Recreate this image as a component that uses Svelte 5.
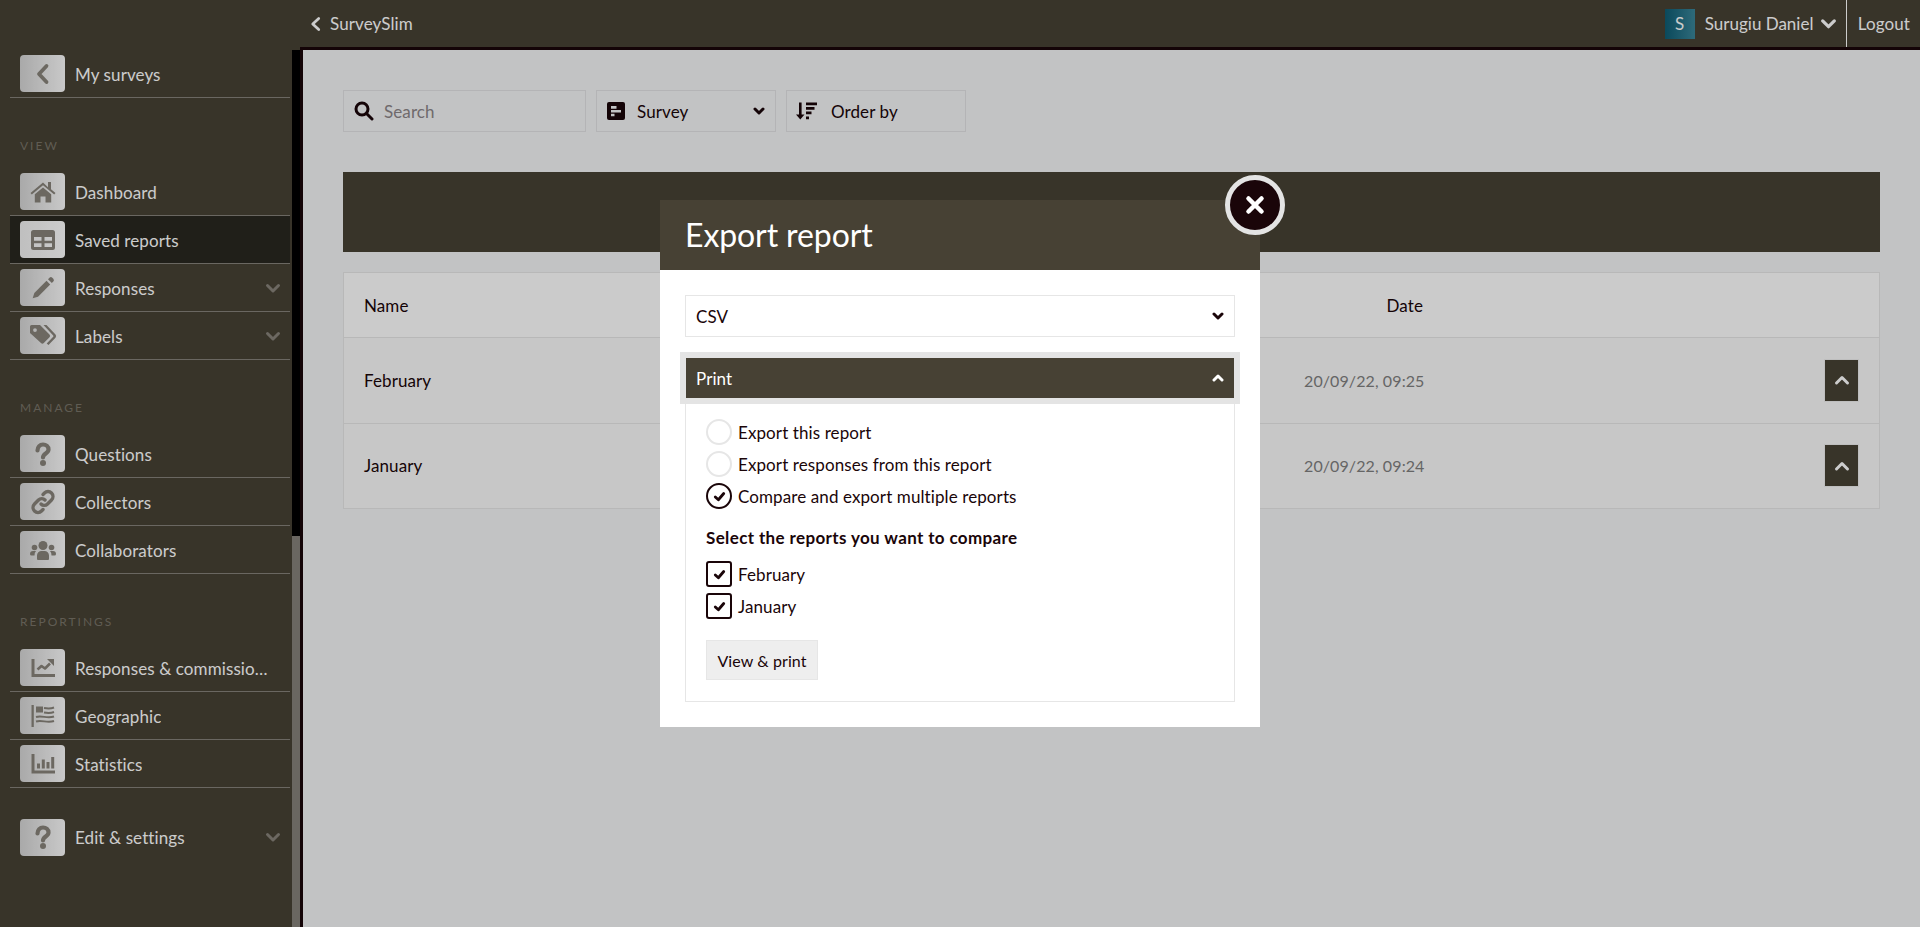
<script>
	const groups = [
		{ label: 'VIEW', items: [
			{ name: 'Dashboard', icon: 'home' },
			{ name: 'Saved reports', icon: 'table', active: true },
			{ name: 'Responses', icon: 'pencil', more: true },
			{ name: 'Labels', icon: 'tags', more: true }
		] },
		{ label: 'MANAGE', items: [
			{ name: 'Questions', icon: 'question' },
			{ name: 'Collectors', icon: 'link' },
			{ name: 'Collaborators', icon: 'users' }
		] },
		{ label: 'REPORTINGS', items: [
			{ name: 'Responses & commissions', icon: 'line' },
			{ name: 'Geographic', icon: 'flag' },
			{ name: 'Statistics', icon: 'bars' }
		] }
	];
	const rows = [
		{ name: 'February', date: '20/09/22, 09:25' },
		{ name: 'January', date: '20/09/22, 09:24' }
	];
	const exportOptions = [
		{ label: 'Export this report' },
		{ label: 'Export responses from this report' },
		{ label: 'Compare and export multiple reports', checked: true }
	];
</script>

{#snippet chevron(cls, up = false)}
	<svg class={cls} viewBox="0 0 16 16"><path d={up ? 'M2.500 11 8 5.500l5.500 5.500' : 'M2.500 5.500 8 11l5.500-5.500'} /></svg>
{/snippet}

{#snippet tick()}
	<svg class="tick" viewBox="0 0 16 16"><path d="M3.500 8.500 6.800 11.500 12.500 4.800" /></svg>
{/snippet}

{#snippet navIcon(kind)}
	<svg class="nav-glyph" viewBox="0 0 24 24">
		{#if kind === 'back'}
			<path class="line" d="M15.500 4 8 12l7.500 8" style="stroke-width:3.800" />
		{:else if kind === 'home'}
			<path d="M12 2.500-0.500 13l1.300 1.600L12 5.200l11.200 9.400 1.300-1.600-4.500-3.800V2h-3v5.200z" />
			<path d="M12 7.500 3.800 14.300V22.500h5.700v-6h5v6h5.700v-8.200z" />
		{:else if kind === 'table'}
			<path fill-rule="evenodd" d="M2.500 2h19A2.500 2.500 0 0 1 24 4.500v15a2.500 2.500 0 0 1-2.500 2.500h-19A2.500 2.500 0 0 1 0 19.500v-15A2.500 2.500 0 0 1 2.500 2zM3 9v3.700h7.500V9zm10.500 0v3.700H21V9zM3 15.300V19h7.500v-3.700zm10.500 0V19H21v-3.700z" />
		{:else if kind === 'pencil'}
			<path d="M15.500 4.800 19.200 8.500 7 20.700l-5.300 1.500L3.300 17z" />
			<path d="M17 3.200l1.500-1.500a2 2 0 0 1 2.800 0l1 1a2 2 0 0 1 0 2.800L20.800 7z" />
		{:else if kind === 'tags'}
			<path fill-rule="evenodd" d="M-1 2.500A1.500 1.500 0 0 1 0.500 1H9l9.500 9.500a2 2 0 0 1 0 2.800L12.800 19a2 2 0 0 1-2.800 0L-1 9zM4 4.200A1.900 1.900 0 1 0 4 8 1.900 1.900 0 0 0 4 4.200z" />
			<path d="M12.500 1h3l9 9.500a2.500 2.500 0 0 1 0 3.200L17.500 21l-1.800-1.600 6.500-6.700a1 1 0 0 0 0-1.300z" />
		{:else if kind === 'question'}
			<path class="line" d="M6.500 8.500C6.500 4.800 9 2.500 12 2.500s5.500 2 5.500 5c0 4-5.500 4-5.500 8" style="stroke-width:4.200" />
			<circle cx="12" cy="21" r="3" />
		{:else if kind === 'link'}
			<path class="line" d="M10 14a4.500 4.500 0 0 0 6.500 0l4-4A4.900 4.900 0 0 0 13.500 3L12 4.500" style="stroke-width:3.400" />
			<path class="line" d="M14 10a4.500 4.500 0 0 0-6.500 0l-4 4A4.900 4.900 0 0 0 10.500 21l1.500-1.500" style="stroke-width:3.400" />
		{:else if kind === 'users'}
			<circle cx="12" cy="7.500" r="4.500" />
			<circle cx="3.500" cy="9.500" r="2.800" />
			<circle cx="20.500" cy="9.500" r="2.800" />
			<path d="M6 21v-3.500A4.500 4.500 0 0 1 10.500 13h3a4.500 4.500 0 0 1 4.500 4.500V21a1 1 0 0 1-1 1H7a1 1 0 0 1-1-1z" />
			<path d="M-1 16a3 3 0 0 1 3-3h3a6 6 0 0 0-1.500 4.500H0.500a1.500 1.500 0 0 1-1.500-1.500zM25 16a3 3 0 0 0-3-3h-3a6 6 0 0 1 1.500 4.500h3a1.500 1.500 0 0 0 1.500-1.500z" />
		{:else if kind === 'line'}
			<path d="M0.500 3h3v15h20.500v3H0.500z" />
			<path class="line" d="M6.500 13.500l4-3.500 3.500 2.500 5-5" style="stroke-width:2.600;stroke-linecap:butt" />
			<path d="M16 3h7v7z" />
		{:else if kind === 'flag'}
			<path d="M0.500 1h2.300v22H0.500z" />
			<path d="M5 2.500h7v6H5z" />
			<path class="line" d="M13 4c3 .5 6 1 10-.5M13 8.500c3 .5 6 1 10-.5M5 13c6-2 11 2 18-.5M5 17.500c6-2 11 2 18-.5" style="stroke-width:2;stroke-linecap:butt" />
		{:else if kind === 'bars'}
			<path d="M0.500 2h3v16.500H24V21.500H0.500zM6 11.500h3v5H6zM10.800 7.500h3v9h-3zM15.500 10h3v6.500h-3zM20.200 5h3v11.500h-3z" />
		{/if}
	</svg>
{/snippet}

{#snippet navRow(name, icon, active = false, more = false, ruled = true)}
	<a class="nav-row" class:active class:ruled href="#top">
		<span class="nav-icon">{@render navIcon(icon)}</span>
		<span class="nav-name">{name}</span>
		{#if more}{@render chevron('nav-more')}{/if}
	</a>
{/snippet}

<div class="page" id="top">
	<header class="topbar">
		<a class="crumb" href="#top">
			<svg class="crumb-back" viewBox="0 0 12 16"><path d="M9.500 2 3 8l6.500 6" /></svg>
			SurveySlim
		</a>
		<div class="account">
			<span class="avatar">S</span>
			<span class="user">Surugiu Daniel</span>
			{@render chevron('user-more')}
			<a class="logout" href="#top">Logout</a>
		</div>
	</header>

	<div class="body">
		<aside class="sidebar">
			<nav class="nav">
				{@render navRow('My surveys', 'back')}
				{#each groups as group}
					<div class="nav-label">{group.label}</div>
					{#each group.items as item}
						{@render navRow(item.name, item.icon, item.active, item.more)}
					{/each}
				{/each}
				<div class="nav-last">
					{@render navRow('Edit & settings', 'question', false, true, false)}
				</div>
			</nav>
			<div class="scrollbar"><div class="thumb"></div></div>
		</aside>

		<main class="main">
			<div class="filters">
				<label class="field search">
					<svg class="field-icon" viewBox="0 0 20 20"><circle cx="8" cy="8" r="6" /><path d="M12.500 12.500 18 18" /></svg>
					<input placeholder="Search" />
				</label>
				<div class="field survey">
					<svg class="survey-icon" viewBox="0 0 18 18">
						<rect width="18" height="18" rx="2" fill="#1a0509" />
						<path d="M4 4h5.500v2.800H4zM4 8h10v2.600H4zM4 11.800h3.500v2.400H4z" fill="#f3f4f6" />
					</svg>
					<span>Survey</span>
					<svg class="mini" viewBox="0 0 12 12"><path d="M2 4l4 4 4-4" /></svg>
				</div>
				<div class="field order">
					<svg class="order-icon" viewBox="0 0 21 18">
						<path d="M3 0.500h2.600V12.500H8.500L4.300 17.500 0 12.500h3zM10 0.500h11v2.700H10zM10 5h8.500v2.700H10zM10 9.500h5.500v2.700H10zM10 14.500h3v2.700h-3z" />
					</svg>
					<span>Order by</span>
				</div>
			</div>

			<div class="band"></div>

			<div class="table">
				<div class="tr head">
					<span class="col-name">Name</span>
					<span class="col-date">Date</span>
				</div>
				{#each rows as row}
					<div class="tr">
						<span class="col-name">{row.name}</span>
						<span class="col-date muted">{row.date}</span>
						<button class="row-btn" aria-label="Open">
							{@render chevron('row-chevron', true)}
						</button>
					</div>
				{/each}
			</div>
		</main>
	</div>

	<div class="overlay"></div>

	<section class="modal">
		<button class="close" aria-label="Close">
			<svg viewBox="0 0 20 20"><path d="M5 5l10 10M15 5 5 15" /></svg>
		</button>
		<h2 class="modal-title">Export report</h2>
		<div class="modal-body">
			<div class="select">
				<span>CSV</span>
				<svg class="mini" viewBox="0 0 12 12"><path d="M2 4l4 4 4-4" /></svg>
			</div>
			<div class="accordion">
				<div class="acc-head">
					<span>Print</span>
					<svg class="mini" viewBox="0 0 12 12"><path d="M2 8l4-4 4 4" /></svg>
				</div>
				<div class="acc-body">
					<div class="options">
						{#each exportOptions as opt}
							<div class="option">
								<span class="radio" class:on={opt.checked}>{#if opt.checked}{@render tick()}{/if}</span>
								<span>{opt.label}</span>
							</div>
						{/each}
					</div>
					<div class="compare-title">Select the reports you want to compare</div>
					<div class="options">
						{#each rows as row}
							<div class="option">
								<span class="check">{@render tick()}</span>
								<span>{row.name}</span>
							</div>
						{/each}
					</div>
					<button class="print-btn">View &amp; print</button>
				</div>
			</div>
		</div>
	</section>
</div>

<style>
	:global(body) { margin: 0; background: #f3f4f6; }
	.page {
		position: relative;
		height: 927px;
		overflow: hidden;
		font-family: "Lato", "Noto Sans", sans-serif;
		font-size: 17px;
		letter-spacing: 0.1px;
		color: #1a0509;
	}
	a { color: inherit; text-decoration: none; }

	.topbar {
		height: 47px;
		background: #474134;
		display: flex;
		justify-content: space-between;
		align-items: center;
		padding-left: 310px;
		color: #fff;
	}
	.crumb { display: flex; align-items: center; gap: 9px; }
	.crumb-back { width: 11px; height: 16px; }
	.account { display: flex; align-items: center; height: 100%; }
	.avatar {
		width: 30px; height: 30px;
		background: linear-gradient(90deg, #0e5c73, #3a8599);
		display: flex; align-items: center; justify-content: center;
	}
	.user { margin-left: 10px; width: 105px; white-space: nowrap; letter-spacing: 0; }
	.user-more { width: 17px; height: 17px; margin-left: 10px; }
	.logout {
		height: 100%;
		margin-left: 9px;
		padding: 0 10px 0 11px;
		border-left: 1px solid #fff;
		display: flex; align-items: center;
	}
	svg path { stroke-linecap: round; stroke-linejoin: round; }
	.crumb-back path, .user-more path, .nav-more path, .row-chevron path, .tick path, .mini path, .close path {
		fill: none;
		stroke: currentColor;
		stroke-width: 3;
	}

	.body { display: flex; height: 880px; }
	.sidebar {
		width: 300px;
		background: #474134;
		display: flex;
		border-top: 3px solid #474134;
		box-sizing: border-box;
	}
	.nav { width: 292px; padding: 0 2px 0 10px; box-sizing: border-box; }
	.scrollbar { width: 8px; background: #000; }
	.thumb { margin-top: 486px; height: 394px; background: #85817a; }
	.nav-row {
		height: 48px;
		box-sizing: border-box;
		padding: 5px 10px;
		display: flex;
		align-items: center;
		color: #fff;
	}
	.nav-row.ruled { border-bottom: 1px solid #85817a; }
	.nav-row.active { background: #292720; }
	.nav-icon {
		flex: none;
		width: 45px; height: 37px;
		margin-right: 10px;
		border-radius: 4px;
		background: linear-gradient(90deg, #d4d4d4, #fbfbfb);
		display: flex; align-items: center; justify-content: center;
	}
	.active .nav-icon { background: linear-gradient(90deg, #f0f0f0, #fff); }
	.nav-glyph { width: 24px; height: 24px; fill: #87837a; overflow: visible; }
	.nav-glyph .line { fill: none; stroke: #87837a; }
	.nav-name {
		max-width: 193px;
		margin-top: 2px;
		white-space: nowrap; overflow: hidden; text-overflow: ellipsis;
	}
	.nav-more { flex: none; width: 16px; height: 16px; margin-left: auto; margin-right: -1px; color: #87837a; }
	.nav-label {
		box-sizing: border-box;
		height: 70px;
		padding: 40px 10px 14px;
		font-size: 12px;
		line-height: 16px;
		letter-spacing: 2px;
		color: #787468;
	}
	.nav-last { margin-top: 25px; }
	.nav-last .nav-name { margin-top: 0; }

	.main {
		flex: 1; min-width: 0;
		box-sizing: border-box;
		border-left: 3px solid #1a0509;
		border-top: 3px solid #1a0509;
		padding: 40px 40px 0;
		background: #f3f4f6;
	}
	.filters { display: flex; gap: 10px; }
	.field {
		height: 42px;
		box-sizing: border-box;
		border: 1px solid #e2e2e4;
		display: flex;
		align-items: center;
	}
	.search { width: 243px; padding-left: 10px; }
	.field-icon { width: 20px; height: 20px; fill: none; stroke: #1a0509; stroke-width: 3; flex: none; }
	.search input {
		border: 0; background: none; outline: 0; min-width: 0; flex: 1;
		margin-left: 10px; padding: 0;
		font: inherit; letter-spacing: inherit; color: #1a0509;
	}
	.search input::placeholder { color: #8b8587; opacity: 1; }
	.survey { width: 180px; padding: 0 10px; }
	.survey-icon { width: 18px; height: 18px; flex: none; margin-right: 12px; }
	.survey span { flex: 1; }
	.order { width: 180px; padding-left: 9px; }
	.order-icon { width: 21px; height: 18px; fill: #1a0509; flex: none; margin-right: 14px; }
	.mini { width: 12px; height: 12px; flex: none; }

	.band { height: 80px; margin-top: 40px; background: #474134; }
	.table { margin-top: 20px; border: 1px solid #e6e6e6; border-bottom: 0; }
	.tr {
		height: 85.500px;
		box-sizing: border-box;
		border-bottom: 1px solid #e6e6e6;
		display: flex;
		align-items: center;
		padding: 0 20px;
		background: #f9f9f9;
	}
	.tr.head { height: 65px; background: #fefefe; }
	.col-name { width: 940px; flex: none; }
	.col-date { width: 119px; text-align: right; flex: none; white-space: nowrap; }
	.muted { color: #7f7f7f; font-size: 16px; }
	.row-btn {
		margin-left: auto;
		width: 35px; height: 43px;
		border: 1px solid #eee;
		background: #474134;
		color: #fff;
		padding: 0;
		display: flex; align-items: center; justify-content: center;
	}
	.row-chevron { width: 16px; height: 16px; }

	.overlay { position: absolute; inset: 0; background: rgba(0, 0, 0, 0.2); }

	.modal {
		position: absolute;
		left: 660px; top: 200px;
		width: 600px;
		background: #fff;
	}
	.close {
		position: absolute;
		right: -25px; top: -25px;
		width: 60px; height: 60px;
		border-radius: 50%;
		border: 5px solid #e4e4e4;
		background: #1a0509;
		color: #fff;
		padding: 0;
		display: flex; align-items: center; justify-content: center;
	}
	.close svg { width: 26px; height: 26px; }
	.close path { stroke-width: 3.500; }
	.modal-title {
		margin: 0;
		height: 70px;
		box-sizing: border-box;
		padding: 0 25px;
		background: #474134;
		color: #fff;
		font-size: 32px;
		font-weight: 400;
		letter-spacing: -0.1px;
		line-height: 70px;
	}
	.modal-body { padding: 25px; }
	.select {
		height: 42px;
		box-sizing: border-box;
		border: 1px solid #e6e6e6;
		padding: 0 10px;
		display: flex;
		align-items: center;
		justify-content: space-between;
	}
	.accordion { margin-top: 21px; }
	.acc-head {
		height: 40px;
		margin: 0 1px;
		padding: 0 10px;
		background: #474134;
		color: #fff;
		display: flex;
		align-items: center;
		justify-content: space-between;
		box-shadow: 0 0 0 6px #e4e4e4;
		position: relative;
	}
	.acc-body {
		border: 1px solid #e6e6e6;
		border-top: 0;
		padding: 21px 20px 21px;
	}
	.options { display: flex; flex-direction: column; gap: 6px; }
	.option { display: flex; align-items: center; gap: 6px; height: 26px; }
	.radio, .check {
		flex: none;
		width: 26px; height: 26px;
		box-sizing: border-box;
		display: flex; align-items: center; justify-content: center;
		border: 2px solid #1a0509;
	}
	.radio { border-radius: 50%; border-color: #e6e6e6; }
	.radio.on { border-color: #1a0509; }
	.check { border-radius: 3px; }
	.tick { width: 15px; height: 15px; }
	.compare-title { font-weight: 700; letter-spacing: 0.37px; margin: 18px 0 12px; line-height: 22px; }
	.print-btn {
		display: block;
		margin-top: 21px;
		width: 112px; height: 40px;
		padding: 0;
		background: #eee;
		border: 1px solid #e6e6e6;
		font: inherit;
		font-size: 16px;
		letter-spacing: inherit;
		color: #1a0509;
	}
</style>
